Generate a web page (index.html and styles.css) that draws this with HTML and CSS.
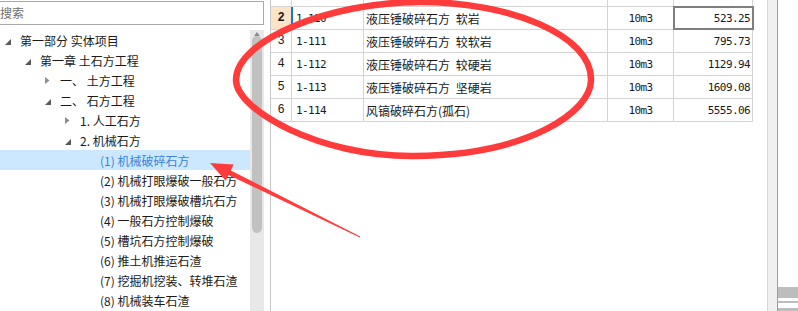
FILE: index.html
```html
<!DOCTYPE html>
<html lang="zh-CN">
<head>
    <meta charset="UTF-8">
    <title>定额库</title>
    <link rel="stylesheet" href="styles.css">
</head>
<body>
    <div class="app">
        <!-- 左侧定额章节树 -->
        <aside class="tree-pane">
            <div class="search">
                <div class="search-box">搜索</div>
            </div>
            <div class="tree-body">
                <ul class="tree">
                    <li class="lv0"><span class="tg"><svg class="open" width="6" height="6"><polygon points="6,0 6,6 0,6"/></svg></span>第一部分 实体项目</li>
                    <li class="lv1"><span class="tg"><svg class="open" width="6" height="6"><polygon points="6,0 6,6 0,6"/></svg></span>第一章 土石方工程</li>
                    <li class="lv2"><span class="tg"><svg class="shut" width="5" height="7"><polygon points="0,0 4.5,3.5 0,7"/></svg></span>一、 土方工程</li>
                    <li class="lv2"><span class="tg"><svg class="open" width="6" height="6"><polygon points="6,0 6,6 0,6"/></svg></span>二、 石方工程</li>
                    <li class="lv3"><span class="tg"><svg class="shut" width="5" height="7"><polygon points="0,0 4.5,3.5 0,7"/></svg></span>1. 人工石方</li>
                    <li class="lv3"><span class="tg"><svg class="open" width="6" height="6"><polygon points="6,0 6,6 0,6"/></svg></span>2. 机械石方</li>
                    <li class="lv4 active"><span class="tg"></span>(1) 机械破碎石方</li>
                    <li class="lv4"><span class="tg"></span>(2) 机械打眼爆破一般石方</li>
                    <li class="lv4"><span class="tg"></span>(3) 机械打眼爆破槽坑石方</li>
                    <li class="lv4"><span class="tg"></span>(4) 一般石方控制爆破</li>
                    <li class="lv4"><span class="tg"></span>(5) 槽坑石方控制爆破</li>
                    <li class="lv4"><span class="tg"></span>(6) 推土机推运石渣</li>
                    <li class="lv4"><span class="tg"></span>(7) 挖掘机挖装、转堆石渣</li>
                    <li class="lv4"><span class="tg"></span>(8) 机械装车石渣</li>
                </ul>
                <div class="vbar">
                    <span class="up"></span>
                    <span class="thumb"></span>
                </div>
                <div class="gap"></div>
            </div>
        </aside>

        <!-- 右侧定额子目列表 -->
        <main class="grid-pane">
            <div class="sheet">
                <div class="row partial">
                    <div class="c num"></div><div class="c code"></div><div class="c name"></div><div class="c unit"></div><div class="c price"></div>
                </div>
                <div class="row sel">
                    <div class="c num">2</div>
                    <div class="c code">1-110</div>
                    <div class="c name">液压锤破碎石方 软岩</div>
                    <div class="c unit">10m3</div>
                    <div class="c price cur">523.25</div>
                </div>
                <div class="row">
                    <div class="c num">3</div>
                    <div class="c code">1-111</div>
                    <div class="c name">液压锤破碎石方 较软岩</div>
                    <div class="c unit">10m3</div>
                    <div class="c price">795.73</div>
                </div>
                <div class="row">
                    <div class="c num">4</div>
                    <div class="c code">1-112</div>
                    <div class="c name">液压锤破碎石方 较硬岩</div>
                    <div class="c unit">10m3</div>
                    <div class="c price">1129.94</div>
                </div>
                <div class="row">
                    <div class="c num">5</div>
                    <div class="c code">1-113</div>
                    <div class="c name">液压锤破碎石方 坚硬岩</div>
                    <div class="c unit">10m3</div>
                    <div class="c price">1609.08</div>
                </div>
                <div class="row">
                    <div class="c num">6</div>
                    <div class="c code">1-114</div>
                    <div class="c name">风镐破碎石方(孤石)</div>
                    <div class="c unit">10m3</div>
                    <div class="c price">5555.06</div>
                </div>
            </div>
            <div class="vbar2"></div>
            <div class="corner">
                <span class="bar b1"></span>
                <span class="bar b2"></span>
                <span class="bar b3"></span>
            </div>
        </main>

        <!-- 红色标注 -->
        <svg class="annot" width="798" height="311" viewBox="0 0 798 311">
            <path class="ring" d="M 420 2 C 510 2, 592 35, 591 80 C 591 112, 528 155, 414 156 C 320 157, 236 110, 236 80 C 236 40, 330 2, 420 2 Z"/>
            <polygon class="arrow" points="210,163 233.7,164.6 230.8,170.5 360.2,236.6 359.8,237.4 228.6,174.9 225.7,180.8"/>
        </svg>
    </div>
</body>
</html>
```

FILE: styles.css
```css
body {
    margin: 0;
    background-color: #ffffff;
    font-family: "Noto Sans CJK SC", "Noto Sans", sans-serif;
    font-size: 12px;
    color: #1a1a1a;
    overflow: hidden;
}

.app {
    position: relative;
    display: flex;
    width: 798px;
    height: 311px;
}

/* tree side */
.tree-pane {
    flex: none;
    width: 270px;
    display: flex;
    flex-direction: column;
}

.search {
    height: 30px;
    flex: none;
}

.search-box {
    box-sizing: border-box;
    width: 270px;
    height: 24px;
    margin: 1px 0 0 -6px;
    padding-left: 5px;
    border: 1px solid #a9a9a9;
    line-height: 22px;
    color: #6e6e6e;
}

.tree-body {
    flex: 1;
    display: flex;
    min-height: 0;
}

.tree {
    flex: 1;
    list-style: none;
    margin: 0;
    padding: 0;
    overflow: hidden;
    white-space: nowrap;
}

.tree li {
    display: flex;
    align-items: center;
    height: 20px;
}

.tree .lv1 { padding-left: 20px; }
.tree .lv2 { padding-left: 40px; }
.tree .lv3 { padding-left: 60px; }
.tree .lv4 { padding-left: 80px; }

.tree .active {
    background-color: #cce8ff;
    color: #3a83d6;
}

.tg {
    flex: none;
    width: 15px;
    height: 20px;
    padding-left: 5px;
    display: flex;
    align-items: center;
}

.tg .open {
    fill: #595959;
    margin-top: 3px;
}

.tg .shut {
    fill: #8e8e8e;
    margin-top: 1px;
}

.vbar {
    flex: none;
    width: 14px;
    background-color: #e8e8e8;
    display: flex;
    flex-direction: column;
    align-items: center;
    padding-top: 2px;
}

.vbar .up {
    width: 0;
    height: 0;
    border-left: 3px solid transparent;
    border-right: 3px solid transparent;
    border-bottom: 4px solid #8c8c8c;
}

.vbar .thumb {
    width: 10px;
    height: 197px;
    border-radius: 5px;
    background-color: #c1c1c1;
}

.gap {
    flex: none;
    width: 6px;
}

/* grid side */
.grid-pane {
    flex: 1;
    display: flex;
    border-left: 1px solid #c8c8c8;
}

.sheet {
    flex: 1;
    overflow: hidden;
}

.row {
    display: flex;
    width: 482px;
    height: 22px;
    border-bottom: 1px solid #d4d4d4;
}

.row.partial {
    margin-top: -16px;
}

.c {
    box-sizing: border-box;
    height: 22px;
    border-right: 1px solid #d4d4d4;
    display: flex;
    align-items: center;
    white-space: nowrap;
    overflow: hidden;
}

.num {
    width: 21px;
    justify-content: center;
    font-family: "Liberation Mono", monospace;
    font-size: 12px;
}

.code {
    width: 72px;
    padding-left: 4px;
}

.name {
    width: 244px;
    padding-left: 2px;
    word-spacing: 3px;
}

.unit {
    width: 66px;
    justify-content: center;
}

.price {
    width: 79px;
    justify-content: flex-end;
    padding-right: 2px;
}

.code, .unit, .price {
    font-family: "DejaVu Sans Mono", monospace;
    font-size: 11px;
    letter-spacing: -0.6px;
}

.row.sel .num {
    background-color: #fde4c6;
    font-weight: bold;
    border-right-color: #1473e6;
}

.row.sel .code {
    box-shadow: inset 1px 0 0 #1473e6;
}

.price.cur {
    outline: 2px solid #7f7f7f;
    outline-offset: -1px;
}

.vbar2 {
    flex: none;
    box-sizing: border-box;
    width: 11px;
    background-color: #f0f0f0;
    border-left: 1px solid #d6d6d6;
    border-right: 1px solid #9e9e9e;
}

.corner {
    flex: none;
    width: 20px;
    display: flex;
    flex-direction: column;
    justify-content: flex-end;
}

.bar {
    display: block;
    background-color: #bdbdbd;
}

.b1 { height: 11px; margin-bottom: 3px; }
.b2 { height: 2px; margin-bottom: 5px; }
.b3 { height: 3px; }

/* red marks drawn over the screen */
.annot {
    position: absolute;
    left: 0;
    top: 0;
    pointer-events: none;
}

.ring {
    fill: none;
    stroke: #ff3b3b;
    stroke-width: 6.5;
}

.arrow {
    fill: #ff3b3b;
}
```
